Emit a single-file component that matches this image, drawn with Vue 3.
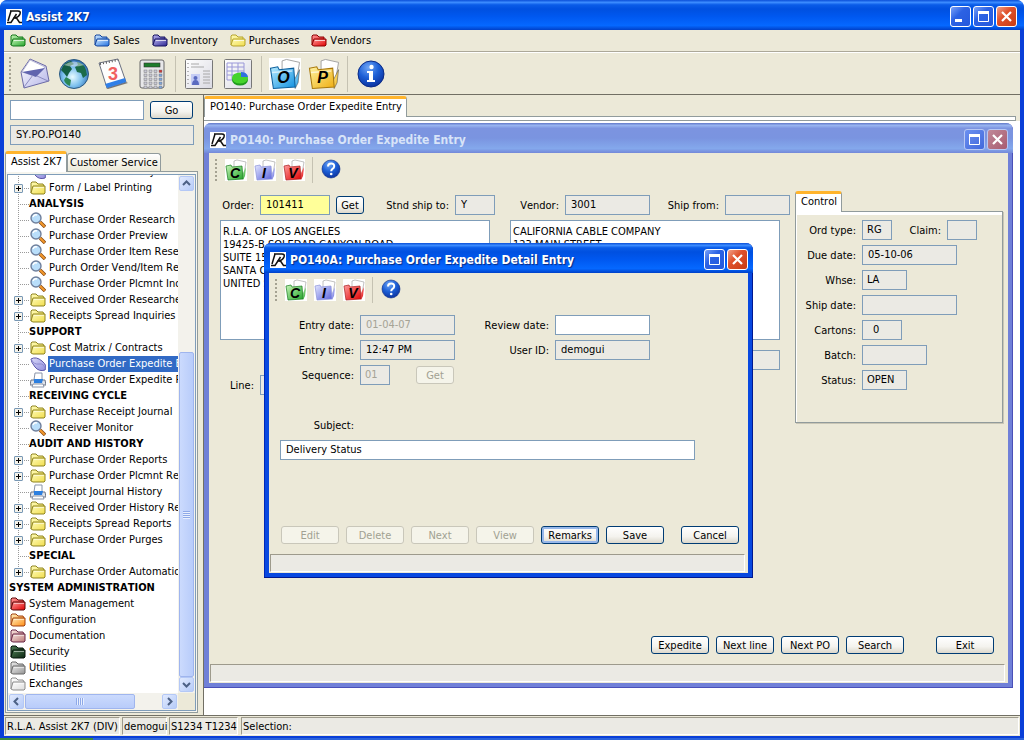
<template>
  <svg class="defs" width="0" height="0" aria-hidden="true">
    <defs>
      <linearGradient v-for="(stops, name) in shades" :id="name" :key="name" x1="0" y1="0" x2="1" y2="1">
        <stop offset="0" :stop-color="stops[0]" />
        <stop offset="1" :stop-color="stops[1]" />
      </linearGradient>
      <radialGradient id="ball" cx="0.4" cy="0.25" r="0.8">
        <stop offset="0" stop-color="#6fa5f5" />
        <stop offset="0.5" stop-color="#1d5fd6" />
        <stop offset="1" stop-color="#0a2f9a" />
      </radialGradient>
      <radialGradient id="sea" cx="0.45" cy="0.6" r="0.65">
        <stop offset="0" stop-color="#e8fbff" />
        <stop offset="0.5" stop-color="#7cc0ee" />
        <stop offset="1" stop-color="#1d5aa8" />
      </radialGradient>
      <symbol id="logo" viewBox="0 0 16 16">
        <rect width="16" height="16" fill="#fff" />
        <path d="M4 2h8q3 0 2 3t-5 4" fill="none" stroke="#111" stroke-width="1.5" />
        <path d="M5 2L2 12M1 13.500h4L10.500 5" fill="none" stroke="#111" stroke-width="1.5" />
        <path d="M7.500 9h3l3 4.500H16" fill="none" stroke="#111" stroke-width="1.5" />
      </symbol>
      <symbol id="lens" viewBox="0 0 16 16">
        <path d="M10 10l5 5" stroke="#8a4a10" stroke-width="3.4" />
        <path d="M10 10l4.6 4.6" stroke="#f59a2c" stroke-width="2" />
        <circle cx="6" cy="6" r="5" fill="#b9defa" stroke="#6f7f9c" stroke-width="1.4" />
        <path d="M3 5q1-3 4-2" fill="none" stroke="#fff" stroke-width="1.4" />
      </symbol>
      <symbol id="disc" viewBox="0 0 16 16">
        <path d="M1 3q5-3 11 2t3 9q-6 2-10-3T1 3z" fill="url(#lilac)" stroke="#5a55a8" />
        <path d="M1 3q3 6 8 5t6 5" fill="none" stroke="#8f8cd0" />
      </symbol>
      <symbol id="printer" viewBox="0 0 16 16">
        <path d="M5 1h7v7H4z" fill="#fff" stroke="#8a94a8" />
        <path d="M1 8h14l1 5H0z" fill="#dfe3ea" stroke="#6c7486" />
        <path d="M4 7h9l-1 4H4z" fill="#2c7fe0" />
        <path d="M3 12h10l1 3H2z" fill="#fff" stroke="#8a94a8" />
      </symbol>
      <symbol id="restore" viewBox="0 0 21 21">
        <path d="M5.5 6.5h10v9h-10z" fill="none" stroke="#fff" />
        <path d="M5 5h11v3H5z" fill="#fff" />
      </symbol>
      <symbol id="close" viewBox="0 0 21 21">
        <path d="M6 6l9 9M15 6l-9 9" stroke="#fff" stroke-width="2.2" />
      </symbol>
      <symbol id="help" viewBox="0 0 22 22">
        <circle cx="11" cy="10" r="9" fill="url(#ball)" stroke="#0a2a86" stroke-width="0.6" />
        <path d="M8 7.5q0-3 3.200-3t3 2.800q0 1.500-1.700 2.600-1.300.9-1.300 2.300" fill="none" stroke="#fff" stroke-width="2" />
        <circle cx="11.200" cy="15" r="1.300" fill="#fff" />
      </symbol>
    </defs>
  </svg>

  <div class="app">
    <header class="titlebar">
      <svg class="logo"><use href="#logo" /></svg>
      <h1>Assist 2K7</h1>
      <button class="ctl" aria-label="Minimize">
        <svg viewBox="0 0 21 21"><path d="M5 13h7v3H5z" fill="#fff" /></svg>
      </button>
      <button class="ctl" aria-label="Maximize"><svg><use href="#restore" /></svg></button>
      <button class="ctl close" aria-label="Close"><svg><use href="#close" /></svg></button>
    </header>

    <div class="client">
      <nav class="menubar">
        <button v-for="m in menus" :key="m.label">
          <svg class="icon" viewBox="0 0 16 16">
            <path d="M1 12V3l1-1h4l2 2h5v3" :fill="`url(#${m.color})`" :stroke="m.line" />
            <path d="M3 6h12v6l-1 1H3l-2-1z" :fill="`url(#${m.color})`" :stroke="m.line" />
            <path d="M4 7.500h10" stroke="#fff" stroke-opacity="0.7" />
          </svg>
          {{ m.label }}
        </button>
      </nav>

      <div class="toolbar big">
        <span class="grip"></span>
        <button aria-label="Mail">
          <svg viewBox="0 0 32 32">
            <path d="M2 14L11 1l16 7 3 15-25 7z" fill="url(#paper)" stroke="#6b6aa6" />
            <path d="M11 2l15 7-10 9L3 14z" fill="#fff" stroke="#a5a5c9" stroke-width="0.7" />
            <path d="M3 14l23-4-9 9z" fill="#6064ae" />
            <path d="M5 29l9-12M29 23l-11-5" fill="none" stroke="#8b8bc0" />
          </svg>
        </button>
        <button aria-label="Web">
          <svg viewBox="0 0 32 32">
            <circle cx="16" cy="16" r="14.500" fill="url(#sea)" stroke="#2b5a80" />
            <path d="M3 12Q6 4 13 3l3 3-4 2 2 3-3 4-2 4-3-4z" fill="#155f45" />
            <path d="M19 4q7 1 9 8l1 5-4 3-2-5-4-1-2-5 3-2z" fill="#1b6b4a" />
            <path d="M8 19l5 3-1 6q-5-2-6-6z" fill="#2b8755" />
            <path d="M6 7Q16 0 26 7q-10 3-20 0z" fill="#fff" fill-opacity="0.45" />
          </svg>
        </button>
        <button aria-label="Calendar">
          <svg viewBox="0 0 32 32">
            <path d="M9 30l20-6 2 1-20 6z" fill="#777" />
            <path d="M2 5l19-4 8 23-19 6z" fill="#fdfdfd" stroke="#6a7080" />
            <path d="M8 26l20-6 1 4-19 6z" fill="#2f7fe8" />
            <path d="M3 6l18-4" stroke="#555" stroke-width="2" stroke-dasharray="1 2" />
            <text x="11" y="22" class="cal-day">3</text>
          </svg>
        </button>
        <button aria-label="Calculator">
          <svg viewBox="0 0 32 32">
            <rect x="4" y="2" width="24" height="28" rx="2" fill="#e8e8ea" stroke="#666" />
            <rect x="8" y="5" width="16" height="4" fill="#1d7c2c" stroke="#333" stroke-width="0.6" />
            <template v-for="r in 5" :key="r">
              <rect
                v-for="c in 4"
                :key="c"
                :x="3 + c * 5"
                :y="8 + r * 4"
                width="3"
                height="2.500"
                :fill="c === 4 ? (r === 1 ? '#c33' : '#7da5dc') : '#c9c9d6'"
                stroke="#777"
                stroke-width="0.500"
              />
            </template>
          </svg>
        </button>
        <span class="sep"></span>
        <button aria-label="Notes">
          <svg viewBox="0 0 32 32">
            <rect x="2.500" y="1.500" width="27" height="29" rx="1" fill="url(#sheet)" stroke="#777" />
            <path d="M8 6h8M8 9h13M20 13h7M20 16h7M20 19h7M20 22h7M20 25h7" stroke="#a8a8a8" />
            <path d="M5 5v22" stroke="#777" stroke-dasharray="1 3" />
            <rect x="8" y="16" width="9" height="11" fill="#c6cdf5" />
            <circle cx="12.500" cy="20" r="2" fill="#5a6ac0" />
            <path d="M9 27q0-5 3.500-5t3.500 5z" fill="#5a6ac0" />
          </svg>
        </button>
        <button aria-label="Chart">
          <svg viewBox="0 0 32 32">
            <rect x="2.500" y="1.500" width="27" height="29" rx="1" fill="url(#sheet)" stroke="#777" />
            <path d="M5 5h17v17H5zM5 9h17M5 13h17M5 17h17M10 5v17M16 5v17" fill="none" stroke="#9a97d8" />
            <ellipse cx="18" cy="22" rx="8" ry="5.500" fill="#1e9a1e" />
            <ellipse cx="18" cy="20" rx="8" ry="5.500" fill="#45d32c" />
            <path d="M19 19v-5q6 0 7 5z" fill="#2f6fe0" />
          </svg>
        </button>
        <span class="sep"></span>
        <button v-for="f in mainFolders" :key="f.letter" :aria-label="f.name">
          <svg viewBox="0 0 22 22">
            <rect v-if="f.letter === 'O'" width="22" height="22" fill="#fff" />
            <path d="M9 2l3-1 9 2-2 12-10-2z" fill="#fff" stroke="#999" stroke-width="0.600" />
            <path d="M17 16l4-8-1 9-2 4z" :fill="`url(#${f.color})`" stroke="#555" stroke-width="0.400" />
            <path d="M1 7l5-1 1 2 10-1 1 13-15 1z" :fill="`url(#${f.color})`" :stroke="f.line" stroke-width="0.700" />
            <path d="M2 10l14-1" stroke="#fff" stroke-opacity="0.600" />
            <text x="10" y="17" class="letter small">{{ f.letter }}</text>
          </svg>
        </button>
        <span class="sep"></span>
        <button aria-label="Information">
          <svg viewBox="0 0 32 32">
            <circle cx="16" cy="16" r="13" fill="url(#ball)" stroke="#0a2a86" />
            <circle cx="16.500" cy="9" r="2.200" fill="#fff" />
            <path d="M12 13h6v9h2v2h-8v-2h2v-7h-2z" fill="#fff" />
          </svg>
        </button>
      </div>

      <main class="main">
        <aside class="sidebar">
          <form class="search" @submit.prevent>
            <input v-model="command" class="command" type="text" aria-label="Command" />
            <button class="btn go">Go</button>
          </form>
          <input class="path" type="text" value="SY.PO.PO140" aria-label="Current program" readonly />
          <div class="side-tabs">
            <button class="tab active">Assist 2K7</button>
            <button class="tab">Customer Service</button>
          </div>
          <div class="tree-panel">
            <div class="tree-box">
              <ul class="tree">
                <li
                  v-for="item in tree"
                  :key="item.text"
                  :class="[item.root ? 'root' : 'leaf', item.icon ? '' : 'heading', { selected: item.text === selected, last: item.last }]"
                  @click="selected = item.text"
                >
                  <span v-if="!item.root && item.icon" class="knob">
                    <button v-if="item.icon === 'folder'" class="plus" :aria-label="'Expand ' + item.text"></button>
                  </span>
                  <svg v-if="item.icon === 'folder'" class="icon" viewBox="0 0 16 16">
                    <path d="M1 13V3l1-1h4l2 2h5l1 2" :fill="`url(#${item.color || 'yellow'})`" :stroke="item.line || '#8f8420'" />
                    <path d="M3 6h12v7l-1 1H3l-2-1z" :fill="`url(#${item.color || 'yellow'})`" :stroke="item.line || '#8f8420'" />
                    <path d="M4 7.500h10" stroke="#fff" stroke-opacity="0.500" />
                  </svg>
                  <svg v-else-if="item.icon" class="icon"><use :href="'#' + item.icon" /></svg>
                  <span class="text">{{ item.text }}</span>
                </li>
              </ul>
              <div class="vscroll">
                <button aria-label="Scroll up"><svg viewBox="0 0 9 9"><path d="M1 6l3.500-3.500L8 6" /></svg></button>
                <span class="track"></span>
                <span class="thumb"></span>
                <button aria-label="Scroll down"><svg viewBox="0 0 9 9"><path d="M1 3l3.500 3.500L8 3" /></svg></button>
              </div>
              <div class="hscroll">
                <button aria-label="Scroll left"><svg viewBox="0 0 9 9"><path d="M6 1L2.500 4.500 6 8" /></svg></button>
                <span class="thumb"></span>
                <span class="track"></span>
                <button aria-label="Scroll right"><svg viewBox="0 0 9 9"><path d="M3 1l3.500 3.500L3 8" /></svg></button>
              </div>
            </div>
          </div>
        </aside>

        <section class="workspace">
          <div class="work-tabs">
            <button class="tab active">PO140: Purchase Order Expedite Entry</button>
          </div>
          <div class="work-edge"></div>

          <div class="desktop">
            <!-- purchase order window -->
            <section class="window po">
              <header class="titlebar">
                <svg class="logo"><use href="#logo" /></svg>
                <h2>PO140: Purchase Order Expedite Entry</h2>
                <button class="ctl" aria-label="Maximize"><svg><use href="#restore" /></svg></button>
                <button class="ctl close" aria-label="Close"><svg><use href="#close" /></svg></button>
              </header>
              <div class="body">
                <div class="toolbar">
                  <span class="grip"></span>
                  <button v-for="f in subFolders" :key="f.letter" :aria-label="f.name">
                    <svg viewBox="0 0 22 22">
                      <rect width="22" height="22" fill="#fff" />
                      <path d="M9 2l3-1 9 2-2 12-10-2z" fill="#fff" stroke="#999" stroke-width="0.600" />
                      <path d="M17 16l4-8-1 9-2 4z" :fill="`url(#${f.color})`" />
                      <path d="M1 7l5-1 1 2 10-1 1 13-15 1z" :fill="`url(#${f.color})`" :stroke="f.line" stroke-width="0.700" />
                      <text x="10" y="19" class="letter">{{ f.letter }}</text>
                    </svg>
                  </button>
                  <span class="sep"></span>
                  <button aria-label="Help"><svg><use href="#help" /></svg></button>
                </div>

                <div class="po-form">
                  <div class="po-left">
                    <div class="row">
                      <label class="l50" for="order">Order:</label>
                      <input id="order" v-model="order" class="w70 current" type="text" />
                      <button class="btn get">Get</button>
                      <label class="l91" for="shipto">Stnd ship to:</label>
                      <input id="shipto" class="w40" type="text" value="Y" readonly />
                      <label class="l70" for="vendor">Vendor:</label>
                      <input id="vendor" class="w85" type="text" value="3001" readonly />
                      <label class="l75" for="shipfrom">Ship from:</label>
                      <input id="shipfrom" class="w65" type="text" readonly />
                    </div>
                    <div class="addresses">
                      <textarea v-model="shipAddress" aria-label="Ship to address"></textarea>
                      <textarea v-model="vendorAddress" aria-label="Vendor address"></textarea>
                      <input class="contact" type="text" aria-label="Vendor contact" readonly />
                    </div>
                    <div class="row">
                      <label class="l50" for="line">Line:</label>
                      <input id="line" class="w40" type="text" readonly />
                    </div>
                  </div>

                  <div class="control">
                    <button class="tab active">Control</button>
                    <div class="control-box">
                      <div v-for="f in controlFields" :key="f.id" class="row">
                        <label class="l65" :for="f.id">{{ f.label }}</label>
                        <input :id="f.id" :class="[f.size, f.id]" type="text" :value="f.value" readonly />
                        <template v-if="f.id === 'ordtype'">
                          <label class="l55" for="claim">Claim:</label>
                          <input id="claim" class="w30" type="text" readonly />
                        </template>
                      </div>
                    </div>
                  </div>
                </div>

                <div class="actions">
                  <button v-for="a in poActions" :key="a" class="btn">{{ a }}</button>
                  <button class="btn apart">Exit</button>
                </div>
                <div class="message"></div>
              </div>
            </section>

            <!-- detail dialog -->
            <section class="window detail">
              <header class="titlebar">
                <svg class="logo"><use href="#logo" /></svg>
                <h2>PO140A: Purchase Order Expedite Detail Entry</h2>
                <button class="ctl" aria-label="Maximize"><svg><use href="#restore" /></svg></button>
                <button class="ctl close" aria-label="Close"><svg><use href="#close" /></svg></button>
              </header>
              <div class="body">
                <div class="toolbar">
                  <span class="grip"></span>
                  <button v-for="f in subFolders" :key="f.letter" :aria-label="f.name">
                    <svg viewBox="0 0 22 22">
                      <rect width="22" height="22" fill="#fff" />
                      <path d="M9 2l3-1 9 2-2 12-10-2z" fill="#fff" stroke="#999" stroke-width="0.600" />
                      <path d="M17 16l4-8-1 9-2 4z" :fill="`url(#${f.color})`" />
                      <path d="M1 7l5-1 1 2 10-1 1 13-15 1z" :fill="`url(#${f.color})`" :stroke="f.line" stroke-width="0.700" />
                      <text x="10" y="19" class="letter">{{ f.letter }}</text>
                    </svg>
                  </button>
                  <span class="sep"></span>
                  <button aria-label="Help"><svg><use href="#help" /></svg></button>
                </div>

                <div class="detail-form">
                  <div class="row">
                    <label class="l90" for="edate">Entry date:</label>
                    <input id="edate" class="w95" type="text" value="01-04-07" disabled />
                    <label class="l100" for="rdate">Review date:</label>
                    <input id="rdate" v-model="reviewDate" class="w95" type="text" />
                  </div>
                  <div class="row">
                    <label class="l90" for="etime">Entry time:</label>
                    <input id="etime" class="w95" type="text" value="12:47 PM" readonly />
                    <label class="l100" for="user">User ID:</label>
                    <input id="user" class="w95" type="text" value="demogui" readonly />
                  </div>
                  <div class="row">
                    <label class="l90" for="seq">Sequence:</label>
                    <input id="seq" class="w30" type="text" value="01" disabled />
                    <button class="btn get-seq" disabled>Get</button>
                  </div>
                  <div class="row subject-row">
                    <label class="l90" for="subject">Subject:</label>
                  </div>
                  <input id="subject" v-model="subject" class="subject" type="text" />
                </div>

                <div class="actions">
                  <button v-for="a in ['Edit', 'Delete', 'Next', 'View']" :key="a" class="btn" disabled>{{ a }}</button>
                  <button class="btn focused">Remarks</button>
                  <button class="btn">Save</button>
                  <button class="btn cancel">Cancel</button>
                </div>
                <div class="message"></div>
              </div>
            </section>
          </div>
        </section>
      </main>

      <footer class="statusbar">
        <span class="company">R.L.A. Assist 2K7 (DIV)</span>
        <span class="user">demogui</span>
        <span class="session">S1234 T1234</span>
        <span class="selection">Selection:</span>
      </footer>
    </div>
    <div class="taskbar"><span></span></div>
  </div>
</template>

<script setup>
import { ref } from "vue";

const command = ref("");
const order = ref("101411");
const reviewDate = ref("");
const subject = ref("Delivery Status");
const selected = ref("Purchase Order Expedite Entry");

const shipAddress = ref("R.L.A. OF LOS ANGELES\n19425-B SOLEDAD CANYON ROAD\nSUITE 150\nSANTA CLARITA, CA\nUNITED STATES");
const vendorAddress = ref("CALIFORNIA CABLE COMPANY\n123 MAIN STREET");

// Gradient stops for the icons
const shades = {
  green: ["#c8f5b8", "#23a52a"],
  blue: ["#d5ecff", "#1f6fe0"],
  indigo: ["#b9b4ef", "#2b2492"],
  yellow: ["#fffcb8", "#f0dc4c"],
  red: ["#ff9c9c", "#e00000"],
  orange: ["#fff0c0", "#ff8a10"],
  rose: ["#fbe6e0", "#b87878"],
  forest: ["#4c7a52", "#0a2410"],
  grey: ["#ececec", "#929292"],
  silver: ["#ffffff", "#dcdcdc"],
  sky: ["#b8ecff", "#0f8fe0"],
  gold: ["#fff2a0", "#efae10"],
  lilac: ["#dcdcfa", "#8f8cdc"],
  periwinkle: ["#e4e8ff", "#5a62dc"],
  paper: ["#ffffff", "#b4b4e8"],
  sheet: ["#ffffff", "#d9d9e2"],
};

const menus = [
  { label: "Customers", color: "green", line: "#14761a" },
  { label: "Sales", color: "blue", line: "#14459c" },
  { label: "Inventory", color: "indigo", line: "#17135e" },
  { label: "Purchases", color: "yellow", line: "#b5a32c" },
  { label: "Vendors", color: "red", line: "#8c0000" },
];

const mainFolders = [
  { letter: "O", name: "Orders", color: "sky", line: "#0d5f9c" },
  { letter: "P", name: "Purchases", color: "gold", line: "#a8780c" },
];

const subFolders = [
  { letter: "C", name: "Customer", color: "green", line: "#1a7a20" },
  { letter: "I", name: "Inventory", color: "periwinkle", line: "#8c94d8" },
  { letter: "V", name: "Vendor", color: "red", line: "#a82020" },
];

const tree = [
  { text: "Purchase Order Entry", icon: "disc" },
  { text: "Form / Label Printing", icon: "folder" },
  { text: "ANALYSIS" },
  { text: "Purchase Order Research", icon: "lens" },
  { text: "Purchase Order Preview", icon: "lens" },
  { text: "Purchase Order Item Research", icon: "lens" },
  { text: "Purch Order Vend/Item Research", icon: "lens" },
  { text: "Purchase Order Plcmnt Inquiry", icon: "lens" },
  { text: "Received Order Researchers", icon: "folder" },
  { text: "Receipts Spread Inquiries", icon: "folder" },
  { text: "SUPPORT" },
  { text: "Cost Matrix / Contracts", icon: "folder" },
  { text: "Purchase Order Expedite Entry", icon: "disc" },
  { text: "Purchase Order Expedite Report", icon: "printer" },
  { text: "RECEIVING CYCLE" },
  { text: "Purchase Receipt Journal", icon: "folder" },
  { text: "Receiver Monitor", icon: "lens" },
  { text: "AUDIT AND HISTORY" },
  { text: "Purchase Order Reports", icon: "folder" },
  { text: "Purchase Order Plcmnt Reports", icon: "folder" },
  { text: "Receipt Journal History", icon: "printer" },
  { text: "Received Order History Reports", icon: "folder" },
  { text: "Receipts Spread Reports", icon: "folder" },
  { text: "Purchase Order Purges", icon: "folder" },
  { text: "SPECIAL" },
  { text: "Purchase Order Automation", icon: "folder", last: true },
  { text: "SYSTEM ADMINISTRATION", root: true },
  { text: "System Management", root: true, icon: "folder", color: "red", line: "#5c0808" },
  { text: "Configuration", root: true, icon: "folder", color: "orange", line: "#a04010" },
  { text: "Documentation", root: true, icon: "folder", color: "rose", line: "#6a2848" },
  { text: "Security", root: true, icon: "folder", color: "forest", line: "#04140a" },
  { text: "Utilities", root: true, icon: "folder", color: "grey", line: "#6a6a6a" },
  { text: "Exchanges", root: true, icon: "folder", color: "silver", line: "#8c8c8c" },
];

const controlFields = [
  { id: "ordtype", label: "Ord type:", value: "RG", size: "w30" },
  { id: "duedate", label: "Due date:", value: "05-10-06", size: "w95" },
  { id: "whse", label: "Whse:", value: "LA", size: "w45" },
  { id: "shipdate", label: "Ship date:", value: "", size: "w95" },
  { id: "cartons", label: "Cartons:", value: "0", size: "w40" },
  { id: "batch", label: "Batch:", value: "", size: "w65" },
  { id: "status", label: "Status:", value: "OPEN", size: "w45" },
];

const poActions = ["Expedite", "Next line", "Next PO", "Search"];
</script>

<style>
body {
  margin: 0;
  overflow: hidden;
}
</style>

<style scoped>
* {
  box-sizing: border-box;
}

.defs {
  position: absolute;
}

.app,
.app button,
.app input,
.app textarea {
  font-family: "DejaVu Sans Condensed", "DejaVu Sans", sans-serif;
  font-size: 11px;
  line-height: 13px;
  font-kerning: none;
  color: #000;
}

.app {
  display: flex;
  flex-direction: column;
  height: 100vh;
  min-height: 620px;
  background: #0a3fd8;
  border-radius: 8px 8px 0 0;
}

button {
  padding: 0;
  margin: 0;
  border: 0;
  background: none;
  white-space: nowrap;
}

svg {
  display: block;
}

/* title bars */
.titlebar {
  display: flex;
  align-items: center;
  gap: 2px;
  flex: none;
  height: 30px;
  padding: 3px 7px 0 6px;
  border-radius: 7px 7px 0 0;
  background: linear-gradient(#0a4fd8, #3c8cff 8%, #0a5ce8 16%, #0050e0 30%, #0058f0 55%, #0568ff 85%, #0040c8);
}

.titlebar .logo {
  width: 16px;
  height: 16px;
}

.titlebar h1,
.titlebar h2 {
  flex: 1;
  margin: 0;
  padding-left: 2px;
  font-size: 12px;
  line-height: 16px;
  font-weight: bold;
  color: #fff;
  text-shadow: 1px 1px 1px #0a2a80;
  white-space: nowrap;
}

.ctl {
  width: 21px;
  height: 21px;
  border: 1px solid #fff;
  border-radius: 3px;
  background: linear-gradient(135deg, #7aa2f8, #2c62e4 40%, #2458dc);
}

.ctl svg {
  width: 21px;
  height: 21px;
  margin: -1px;
}

.ctl.close {
  background: linear-gradient(135deg, #f0a088, #e0512c 40%, #c83c14);
}

.client {
  display: flex;
  flex-direction: column;
  flex: 1;
  min-height: 0;
  margin: 0 4px 2px;
  background: #ece9d8;
}

.menubar {
  display: flex;
  align-items: center;
  gap: 12px;
  height: 22px;
  padding-left: 6px;
  border-bottom: 1px solid #aca899;
}

.menubar button {
  display: flex;
  align-items: center;
  gap: 3px;
}

.icon {
  flex: none;
  width: 16px;
  height: 16px;
}

/* toolbars */
.toolbar {
  display: flex;
  align-items: center;
  gap: 7px;
  height: 33px;
  padding-left: 5px;
}

.toolbar button,
.toolbar svg {
  width: 22px;
  height: 22px;
}

.toolbar.big {
  height: 43px;
  border-top: 1px solid #fff;
  border-bottom: 1px solid #716f64;
}

.toolbar.big button,
.toolbar.big svg {
  width: 32px;
  height: 32px;
}

.grip {
  width: 3px;
  height: 22px;
  background: repeating-linear-gradient(#a5a292 0 2px, transparent 2px 4px);
  border-right: 1px solid #ece9d8;
}

.big .grip {
  height: 34px;
}

.sep {
  width: 1px;
  height: 26px;
  background: #c5c2b2;
}

.big .sep {
  height: 36px;
}

.letter {
  font: italic bold 14px "Liberation Sans", sans-serif;
  text-anchor: middle;
}

.letter.small {
  font-size: 11px;
}

.cal-day {
  font: bold 18px "Liberation Sans", sans-serif;
  fill: #f06060;
}

/* left pane */
.main {
  display: flex;
  flex: 1;
  min-height: 0;
}

.sidebar {
  display: flex;
  flex-direction: column;
  flex: none;
  width: 199px;
  padding-top: 5px;
}

.search {
  display: flex;
  align-items: center;
  gap: 6px;
  padding-left: 6px;
}

input {
  height: 20px;
  min-width: 0;
  padding: 0 5px 2px;
  border: 1px solid #7f9db9;
  border-radius: 0;
  background: #fff;
}

input:read-only {
  background: #ebeae4;
}

.app input:disabled {
  color: #a5a395;
  background: #ebeae4;
}

.command {
  width: 134px;
}

.path {
  width: 184px;
  margin: 5px 0 6px 6px;
}

.btn {
  width: 58px;
  height: 18px;
  border: 1px solid #003c74;
  border-radius: 3px;
  background: linear-gradient(#fff, #f4f3ee 60%, #dcd8cc);
}

.app .btn:disabled {
  border-color: #c9c7ba;
  background: #f5f4ea;
  color: #a1a192;
}

.btn.focused {
  box-shadow: inset 0 0 0 2px #98b8ea;
}

.btn.go {
  width: 43px;
}

.side-tabs {
  display: flex;
  align-items: flex-end;
  height: 20px;
  padding-left: 1px;
}

.tab {
  height: 18px;
  padding: 0 2px;
  border: 1px solid #919b9c;
  border-bottom: 0;
  border-radius: 3px 3px 0 0;
  background: linear-gradient(#fff, #ece9d8);
}

.tab.active {
  z-index: 1;
  height: 21px;
  margin-bottom: -1px;
  padding: 0 4px 3px 5px;
  border-top: 3px solid #ffb42c;
  background: #fff;
}

.tree-panel {
  display: flex;
  flex: 1;
  min-height: 0;
  margin: 0 5px 2px 1px;
  padding: 2px 1px 1px;
  border: 1px solid #919b9c;
  background: #f6f5ee;
}

.tree-box {
  display: grid;
  grid-template-columns: minmax(0, 1fr) 17px;
  grid-template-rows: minmax(0, 1fr) 17px;
  flex: 1;
  min-width: 0;
  border: 1px solid #7f9db9;
  background: #ece9d8;
}

.tree {
  margin: 0;
  padding: 0;
  overflow: hidden;
  list-style: none;
  background: #fff;
}

.tree li {
  display: flex;
  align-items: center;
  height: 16px;
  white-space: nowrap;
}

/* list is scrolled part of a row down */
.tree li:first-child {
  margin-top: -11px;
}

.leaf {
  background:
    repeating-linear-gradient(#999 0 1px, transparent 1px 2px) 10px 0 / 1px 100% no-repeat,
    repeating-linear-gradient(90deg, #999 0 1px, transparent 1px 2px) 10px 8px / 12px 1px no-repeat;
}

.leaf.last {
  background:
    repeating-linear-gradient(#999 0 1px, transparent 1px 2px) 10px 0 / 1px 8px no-repeat,
    repeating-linear-gradient(90deg, #999 0 1px, transparent 1px 2px) 10px 8px / 12px 1px no-repeat;
}

.knob {
  flex: none;
  width: 22px;
  padding-left: 6px;
}

.plus {
  display: block;
  width: 9px;
  height: 9px;
  border: 1px solid #7898b5;
  border-radius: 1px;
  background:
    linear-gradient(#000, #000) center / 5px 1px no-repeat,
    linear-gradient(#000, #000) center / 1px 5px no-repeat,
    #f4f2ea;
}

.root {
  padding-left: 2px;
}

.tree .text {
  height: 16px;
  padding-left: 1px;
  margin-left: 2px;
  line-height: 16px;
}

.heading {
  font-weight: bold;
}

.leaf.heading .text {
  margin-left: 20px;
}

.root.heading {
  padding-left: 0;
}

.root.heading .text {
  margin-left: 0;
}

.selected .text {
  flex: 1;
  color: #fff;
  background: #316ac5;
}

.vscroll,
.hscroll {
  display: flex;
  padding: 1px;
  background: #f3f2ec;
}

.vscroll {
  flex-direction: column;
}

.vscroll button,
.hscroll button {
  display: grid;
  place-items: center;
  flex: none;
  width: 15px;
  height: 15px;
  border: 1px solid #b4c8f6;
  border-radius: 2px;
  background: linear-gradient(135deg, #e1eafe, #b6cbf8);
}

.vscroll button svg,
.hscroll button svg {
  width: 9px;
  height: 9px;
  fill: none;
  stroke: #4d6185;
  stroke-width: 2;
}

.thumb {
  border: 1px solid #9fb5ee;
  border-radius: 2px;
}

.track {
  flex: 1;
}

.vscroll .thumb {
  flex: 2;
  background:
    repeating-linear-gradient(#8ea9e8 0 1px, #e8effe 1px 2px) center / 7px 8px no-repeat,
    linear-gradient(90deg, #cbdafd, #b8ccfa);
}

.hscroll .thumb {
  flex: 4;
  margin-left: 1px;
  background:
    repeating-linear-gradient(90deg, #8ea9e8 0 1px, #e8effe 1px 2px) center / 8px 7px no-repeat,
    linear-gradient(#cbdafd, #b8ccfa);
}

/* work area */
.workspace {
  display: flex;
  flex-direction: column;
  flex: 1;
  min-width: 0;
  border-left: 1px solid #716f64;
}

.work-tabs {
  display: flex;
  align-items: flex-end;
  height: 21px;
}

.work-edge {
  height: 5px;
  margin-right: 4px;
  border: 1px solid #919b9c;
  border-left: 0;
  background: #fff;
}

.desktop {
  position: relative;
  flex: 1;
  background: #fff;
}

.window {
  position: absolute;
  display: flex;
  flex-direction: column;
  padding: 0 5px 5px;
  border-radius: 7px 7px 0 0;
}

.window .titlebar {
  margin: 0 -5px;
  padding-right: 5px;
}

.window.po {
  inset: 2px 7px 27px 0;
  background: #7080d8;
  box-shadow: inset -1px -1px #4a50b8;
}

.po .titlebar {
  background: linear-gradient(#6078c8, #98b4f0 8%, #7c94e0 18%, #7a94e0 50%, #84a8ec 85%, #7488d8);
}

.po .titlebar h2 {
  color: #d8e4f8;
  text-shadow: none;
}

.po .ctl {
  border-color: #b8c8f4;
  background: linear-gradient(135deg, #6c90f0, #4068dc);
}

.po .ctl.close {
  background: linear-gradient(135deg, #c08898, #a85c70);
}

.window.detail {
  left: 60px;
  top: 122px;
  width: 489px;
  height: 335px;
  background: #0848e0;
  box-shadow: inset -1px -1px #001890, inset 1px 0 #0028b8;
}

.body {
  display: flex;
  flex-direction: column;
  flex: 1;
  padding: 0 1px 1px;
  background: #ece9d8;
}

.message {
  height: 18px;
  margin-right: 2px;
  border: 1px solid #9d9a8c;
  border-right-color: #fff;
  border-bottom-color: #fff;
  background: #ebeae4;
}

.row {
  display: flex;
  align-items: center;
  height: 20px;
}

.row label {
  flex: none;
  padding-right: 6px;
  text-align: right;
  white-space: nowrap;
}

.l50 { width: 50px; }
.l55 { width: 55px; }
.l65 { width: 66px; }
.l70 { width: 70px; }
.l75 { width: 75px; }
.l90 { width: 90px; }
.l91 { width: 91px; }
.l100 { width: 100px; }

.w30 { width: 30px; }
.w40 { width: 40px; }
.w45 { width: 45px; }
.w65 { width: 65px; }
.w70 { width: 70px; }
.w85 { width: 85px; }
.w95 { width: 95px; }

.w30,
.w45 {
  padding-left: 4px;
  padding-right: 0;
}

.current {
  background: #ffff99;
}

.btn.get {
  width: 28px;
  margin-left: 6px;
}

.po-form {
  display: flex;
  align-items: flex-start;
  gap: 5px;
  flex: 1;
}

.po-left {
  flex: none;
  width: 580px;
  padding-top: 9px;
}

.addresses {
  display: grid;
  grid-template-columns: 270px 270px;
  gap: 10px 20px;
  padding: 5px 10px;
}

.addresses textarea {
  display: block;
  height: 120px;
  padding: 4px 2px;
  border: 1px solid #7f9db9;
  resize: none;
  overflow: hidden;
}

.contact {
  grid-column: 2;
}

.control {
  display: flex;
  flex-direction: column;
  align-items: flex-start;
  flex: none;
  width: 208px;
  padding-top: 5px;
}

.control-box {
  display: flex;
  flex-direction: column;
  gap: 5px;
  width: 100%;
  height: 212px;
  padding-top: 8px;
  border: 1px solid #919b9c;
  box-shadow: inset 0 3px #fff, inset 1px 0 #fff, 1px 1px #c9c6b6;
}

.cartons {
  padding-left: 10px;
}

.actions {
  display: flex;
  gap: 7px;
  flex: none;
}

.po .actions {
  justify-content: flex-end;
  padding: 0 13px 10px 0;
}

.apart {
  margin-left: 25px;
}

.detail-form {
  display: flex;
  flex-direction: column;
  gap: 5px;
  flex: 1;
  padding-top: 9px;
}

.get-seq {
  width: 38px;
  margin-left: 26px;
}

.subject-row {
  margin-top: 25px;
}

.subject {
  width: 415px;
  margin-left: 10px;
}

.detail .actions {
  padding: 0 8px 10px 11px;
}

.cancel {
  margin-left: auto;
}

/* bottom */
.statusbar {
  display: flex;
  gap: 2px;
  height: 21px;
  padding: 1px;
  border-top: 1px solid #716f64;
}

.statusbar span {
  padding: 2px 0 0 1px;
  border: 1px solid #9d9a8c;
  border-right-color: #fff;
  border-bottom-color: #fff;
  background: #ebeae4;
  white-space: nowrap;
}

.company { width: 115px; }
.user { width: 45px; }
.session { width: 69px; }

.selection {
  flex: 1;
  margin-left: 1px;
}

.taskbar {
  height: 2px;
  background: #2c64dc;
}

.taskbar span {
  display: block;
  width: 93px;
  height: 2px;
  background: #3c8c3c;
}
</style>
